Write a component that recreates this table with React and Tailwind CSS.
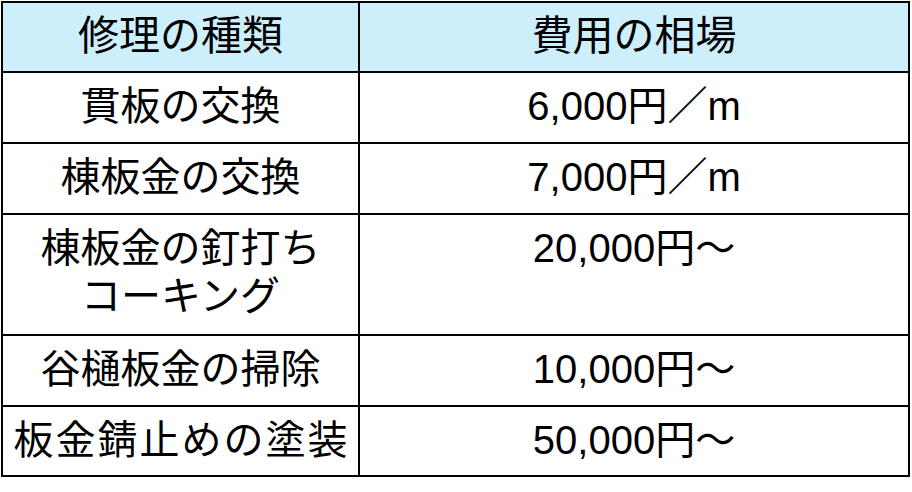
import React from 'react'

const rows = [
    { name: ['貫板の交換'], price: '6,000円／m', h: 'h-[71px]' },
    { name: ['棟板金の交換'], price: '7,000円／m', h: 'h-[71px]' },
    { name: ['棟板金の釘打ち', 'コーキング'], price: '20,000円～', h: 'h-[121px]' },
    { name: ['谷樋板金の掃除'], price: '10,000円～', h: 'h-[71px]' },
    { name: ['板金錆止めの塗装'], price: '50,000円～', h: 'h-[70px]', wide: true },
]

const App = () => {
    return (
        <div className="w-[912px] h-[492px] bg-white pt-[1px] pl-[1px] font-['Liberation_Sans','Noto_Sans_CJK_JP',sans-serif] text-black">
            <table className="w-[909px] border-collapse border-2 border-[#222] table-fixed">
                <colgroup>
                    <col className="w-[357px]" />
                    <col />
                </colgroup>
                <thead>
                    <tr className="h-[70px] bg-[#cdeffc]">
                        <th className="border-2 border-black align-top pt-[9px] text-[41px] leading-[48px] font-normal">修理の種類</th>
                        <th className="border-2 border-black align-top pt-[9px] text-[41px] leading-[48px] font-normal">費用の相場</th>
                    </tr>
                </thead>
                <tbody>
                    {rows.map((row, i) => (
                        <tr key={i} className={row.h}>
                            <td className={`border-2 border-black align-top pt-[9px] text-center text-[40px] leading-[48px] whitespace-nowrap ${row.wide ? 'tracking-[2px] pl-[2px]' : ''}`}>
                                {row.name.map((line, j) => (
                                    <div key={j}>{line}</div>
                                ))}
                            </td>
                            <td className="border-2 border-black align-top pt-[9px] text-center text-[40px] leading-[48px] whitespace-nowrap">{row.price}</td>
                        </tr>
                    ))}
                </tbody>
            </table>
        </div>
    )
}

export default App
